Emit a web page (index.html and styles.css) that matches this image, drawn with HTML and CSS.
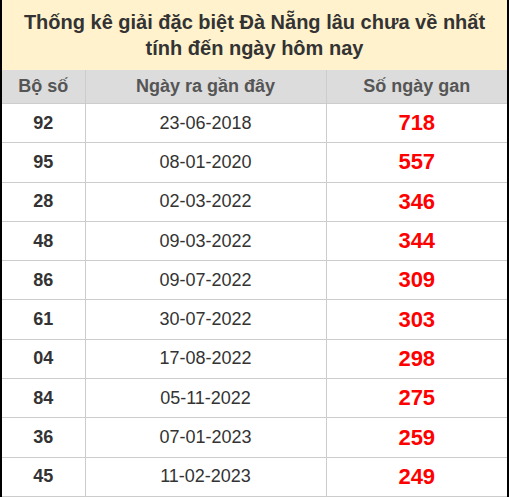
FILE: index.html
```html
<!DOCTYPE html>
<html lang="vi">
<head>
<meta charset="utf-8">
<link rel="stylesheet" href="styles.css">
</head>
<body>
<div class="box">
  <div class="title">Thống kê giải đặc biệt Đà Nẵng lâu chưa về nhất<br>tính đến ngày hôm nay</div>
  <table class="stats">
    <colgroup><col class="c1"><col class="c2"><col class="c3"></colgroup>
    <thead>
      <tr><th>Bộ số</th><th>Ngày ra gần đây</th><th>Số ngày gan</th></tr>
    </thead>
    <tbody>
      <tr><td class="num">92</td><td class="date">23-06-2018</td><td class="gan">718</td></tr>
      <tr><td class="num">95</td><td class="date">08-01-2020</td><td class="gan">557</td></tr>
      <tr><td class="num">28</td><td class="date">02-03-2022</td><td class="gan">346</td></tr>
      <tr><td class="num">48</td><td class="date">09-03-2022</td><td class="gan">344</td></tr>
      <tr><td class="num">86</td><td class="date">09-07-2022</td><td class="gan">309</td></tr>
      <tr><td class="num">61</td><td class="date">30-07-2022</td><td class="gan">303</td></tr>
      <tr><td class="num">04</td><td class="date">17-08-2022</td><td class="gan">298</td></tr>
      <tr><td class="num">84</td><td class="date">05-11-2022</td><td class="gan">275</td></tr>
      <tr><td class="num">36</td><td class="date">07-01-2023</td><td class="gan">259</td></tr>
      <tr><td class="num">45</td><td class="date">11-02-2023</td><td class="gan">249</td></tr>
    </tbody>
  </table>
</div>
</body>
</html>
```
FILE: styles.css
```css
html, body {
  margin: 0;
  padding: 0;
  background: #000;
}
body {
  font-family: "Liberation Sans", Arial, sans-serif;
  color: #333;
}
.box {
  width: 505px;
  margin-left: 2px;
  background: #fff;
}
.title {
  background: #fff2cc;
  text-align: center;
  font-weight: bold;
  font-size: 20px;
  line-height: 26px;
  padding: 9px 0 9px;
  color: #333;
}
.stats {
  width: 100%;
  border-collapse: collapse;
  table-layout: fixed;
}
.c1 { width: 83px; }
.c2 { width: 241px; }
.c3 { width: auto; }
.stats th,
.stats td {
  border: 1px solid #ccc;
  text-align: center;
  padding: 0;
}
.stats tr > :first-child { border-left: 0; }
.stats tr > :last-child { border-right: 0; }
.stats th {
  background: #dcdcdc;
  color: #555;
  font-size: 18px;
  font-weight: bold;
  height: 33px;
  border-top: 0;
}
.stats tbody tr {
  height: 39.3px;
}
.stats td {
  font-size: 18px;
}
.num { font-weight: bold; color: #333; }
.date { color: #333; }
.gan {
  color: #ff0000;
  font-weight: bold;
  font-size: 22px !important;
}
```
